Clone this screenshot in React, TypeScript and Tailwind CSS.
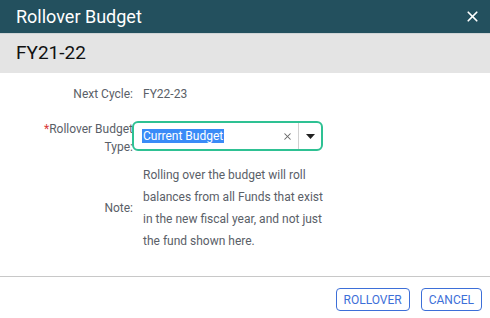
import { X } from "lucide-react"

export default function App() {
  return (
    <div className="flex h-[318px] w-[490px] flex-col bg-white font-['Roboto',sans-serif]">
      {/* title bar */}
      <div className="flex h-[33px] items-center justify-between bg-[#23505e] pl-4 pr-[9px]">
        <span className="text-[18px] text-white">Rollover Budget</span>
        <X className="h-[17px] w-[17px] text-white" strokeWidth={2.4} />
      </div>
      <div className="flex h-[40px] items-center border-t border-[#cfd4d6] bg-[#e4e4e4] px-4">
        <span className="text-[19px] text-[#111]">FY21-22</span>
      </div>

      <div className="flex flex-1 flex-col pt-[13px] text-[12px] text-[#5a6068]">
        <div className="flex h-[16px] items-center">
          <span className="w-[133px] text-right">Next Cycle:</span>
          <span className="ml-[10px]">FY22-23</span>
        </div>

        <div className="mt-[18px] flex items-start">
          <div className="w-[133px] text-right leading-[18px]">
            <span className="text-[#d9383a]">*</span>Rollover Budget
            <br />
            Type:
          </div>
          <div className="-ml-[1px] mt-[1px] flex h-[30px] w-[191px] items-center rounded-[6px] border-2 border-[#2ec193] pl-[8px]">
            <span className="flex-1">
              <span className="bg-[#3a8bf7] px-[1px] text-[12px] text-white">Current Budget</span>
            </span>
            <span className="flex h-full w-[22px] items-center justify-center border-r border-[#d0d0d0] text-[#666]">
              <X className="h-[11px] w-[11px]" strokeWidth={2.2} />
            </span>
            <span className="flex h-full w-[22px] items-center justify-center">
              <svg width="9" height="5" viewBox="0 0 9 5">
                <path d="M0 0h9L4.5 5z" fill="#222" />
              </svg>
            </span>
          </div>
        </div>

        <div className="mt-[8px] flex items-center">
          <span className="w-[133px] text-right">Note:</span>
          <p className="ml-[10px] w-[182px] leading-[22px]">
            Rolling over the budget will roll balances from all Funds that exist in the new fiscal year, and not just
            the fund shown here.
          </p>
        </div>
      </div>

      <div className="flex h-[42px] items-start justify-end gap-[11px] border-t border-[#c8c8c8] px-[8px] pt-[11px]">
        <button className="h-[23px] rounded-[4px] border border-[#3d6fd8] px-[7px] text-[12px] leading-none text-[#3d6fd8]">
          ROLLOVER
        </button>
        <button className="h-[23px] rounded-[4px] border border-[#3d6fd8] px-[7px] text-[12px] leading-none text-[#3d6fd8]">
          CANCEL
        </button>
      </div>
    </div>
  )
}
